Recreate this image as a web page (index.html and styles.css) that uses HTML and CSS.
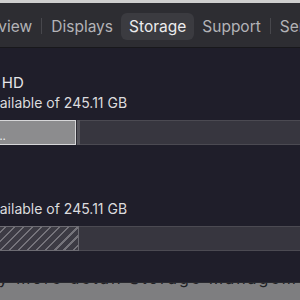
FILE: index.html
```html
<!DOCTYPE html>
<html lang="en">
<head>
    <meta charset="UTF-8">
    <meta name="viewport" content="width=device-width, initial-scale=1.0">
    <title>Storage</title>
    <link rel="stylesheet" href="styles.css">
</head>
<body>
    <div class="window">
        <div class="toolbar">
            <div class="tabs">
                <span class="tab">Overview</span>
                <span class="sep"></span>
                <span class="tab">Displays</span>
                <span class="tab active">Storage</span>
                <span class="tab">Support</span>
                <span class="sep"></span>
                <span class="tab">Service</span>
            </div>
        </div>

        <div class="content">
            <div class="volume">
                <div class="name">Macintosh HD</div>
                <div class="info">193.22 GB available of 245.11 GB</div>
                <div class="bar">
                    <div class="used"><span class="label">Macintosh HD Data Volume</span></div>
                    <div class="handle"></div>
                </div>
            </div>

            <div class="volume">
                <div class="name">Data</div>
                <div class="info">193.22 GB available of 245.11 GB</div>
                <div class="bar">
                    <div class="used hatched"></div>
                </div>
            </div>
        </div>

        <div class="footer">
            <div class="footer-text">ray more detail Storage Management</div>
        </div>
    </div>
</body>
</html>
```

FILE: styles.css
```css
html, body {
    margin: 0;
    padding: 0;
    background-color: #1f1e2a;
}
body {
    font-family: Inter, "Noto Sans", sans-serif;
    overflow: hidden;
}
.window {
    width: 300px;
    height: 300px;
    overflow: hidden;
}
.toolbar {
    height: 44px;
    background-color: #2d2d32;
    border-top: 3px solid #cfcfcf;
    border-bottom: 1px solid #18181b;
    display: flex;
    align-items: center;
}
.tabs {
    display: flex;
    align-items: center;
    margin-left: -45px;
    margin-top: 2px;
    white-space: nowrap;
}
.tab {
    font-size: 15.5px;
    color: #b3b3b7;
    padding: 4px 8px;
    border-radius: 6px;
}
.tab.active {
    color: #ececee;
    background-color: #3b3b40;
}
.sep {
    width: 1px;
    height: 16px;
    background-color: #47474c;
    margin: 0 1px;
}
.content {
    height: 234px;
    overflow: hidden;
    margin-left: -87px;
    padding-top: 26px;
    box-sizing: border-box;
}
.volume {
    margin-bottom: 35px;
}
.name {
    font-size: 15px;
    color: #e6e6e8;
    line-height: 18px;
    padding-left: 11px;
}
.info {
    font-size: 14px;
    color: #dcdcde;
    margin-top: 2px;
    line-height: 18px;
}
.bar {
    margin-top: 8px;
    height: 23px;
    background-color: #37363f;
    border-top: 1px solid #4b4a52;
    border-bottom: 1px solid #4b4a52;
    display: flex;
}
.used {
    width: 163px;
    background-color: #8c8c8e;
    border: 1px solid #d6d6d8;
    box-sizing: border-box;
    margin: -1px 0;
    height: 25px;
    font-size: 11px;
    color: #f2f2f2;
    display: flex;
    align-items: center;
    padding-left: 6px;
    padding-top: 6px;
}
.label {
    width: 88px;
    overflow: hidden;
    white-space: nowrap;
    text-overflow: ellipsis;
}
.used.hatched {
    width: 166px;
    border-color: #6c6b72;
    background-color: #3c3b44;
    background-image: repeating-linear-gradient(135deg, #75747b 0, #75747b 1.5px, transparent 1.5px, transparent 6.4px);
}
.handle {
    width: 3px;
    margin: -1px 0;
    background-color: #55545b;
    border-left: 1px solid #2c2b33;
}
.footer {
    height: 18px;
    background-color: #7e7e80;
    border-top: 1px solid #2a2a30;
    overflow: hidden;
}
.footer-text {
    transform: translateY(-14px);
    margin-left: -20px;
    font-size: 16px;
    line-height: 18px;
    color: #202024;
    white-space: nowrap;
    letter-spacing: 2px;
}
```
